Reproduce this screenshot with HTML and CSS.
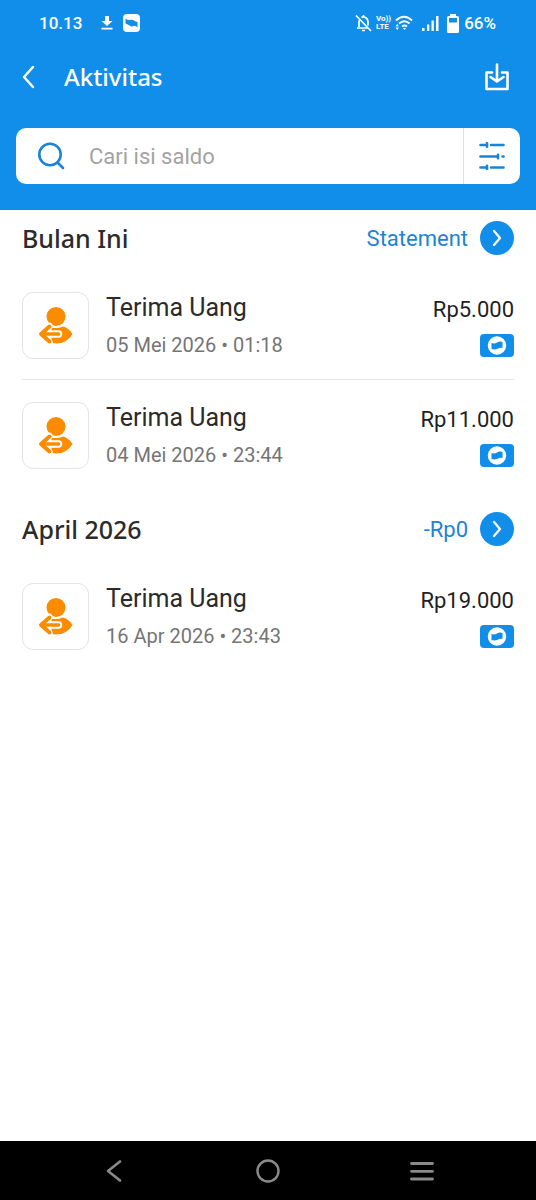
FILE: index.html
```html
<!DOCTYPE html>
<html lang="id">
<head>
<meta charset="utf-8">
<meta name="viewport" content="width=device-width, initial-scale=1">
<title>Aktivitas</title>
<link rel="stylesheet" href="styles.css">
</head>
<body>
<svg class="defs" aria-hidden="true">
  <symbol id="receive" viewBox="0 0 36 38">
    <circle cx="18" cy="9.500" r="9.500" fill="#fb8c00"/>
    <path d="M13 20.500Q19 22 25 19.500Q31 21 34.500 27Q29 36.500 18 36.500L13.500 36V20Z" fill="#fb8c00"/>
    <path d="M11.500 19L3 27L11.500 35" fill="none" stroke="#fff" stroke-width="6.500" stroke-linecap="round" stroke-linejoin="round"/>
    <path d="M8 27H20.500" fill="none" stroke="#fff" stroke-width="7.500" stroke-linecap="round"/>
    <path d="M11.500 19.500L3 27L11.500 34.500" fill="none" stroke="#fb8c00" stroke-width="4" stroke-linecap="round" stroke-linejoin="round"/>
    <path d="M4 27H20.500" fill="none" stroke="#fb8c00" stroke-width="3.600" stroke-linecap="round"/>
  </symbol>
  <symbol id="wallet" viewBox="0 0 34 23">
    <rect width="34" height="23" rx="4" fill="#118eea"/>
    <circle cx="17" cy="11.500" r="9.200" fill="#fff"/>
    <path d="M11.500 9Q14.500 10 17 8.500T22.500 8V14Q20 13.500 17.500 14.700T11.500 15Z" fill="#118eea"/>
  </symbol>
  <symbol id="go" viewBox="0 0 34 34">
    <circle cx="17" cy="17" r="17" fill="#118eea"/>
    <path d="M14 10L20 17L14 24" fill="none" stroke="#fff" stroke-width="2.200" stroke-linecap="round" stroke-linejoin="round"/>
  </symbol>
</svg>
<div class="app">
  <header class="header">
    <div class="status">
      <span class="clock">10.13</span>
      <svg class="status-download" width="12" height="14" viewBox="0 0 12 14"><path d="M4 0H8V5H11.500L6 10L.5 5H4ZM.5 11.800H11.500V13.500H.5Z" fill="#fff"/></svg>
      <svg class="status-app" width="17" height="18" viewBox="0 0 17 18"><rect width="17" height="18" rx="4" fill="#fff"/><path d="M2.500 4.500Q4.500 6.500 7 6T11 6.500Q12.500 7.800 14.500 8V13.500Q12.500 11 10.500 12T6.500 11.500Q4 10 2.500 9.500Z" fill="#118eea"/></svg>
      <div class="status-right">
        <svg width="17" height="18" viewBox="0 0 17 18" fill="none" stroke="#fff" stroke-width="1.700"><path d="M1 1.500L16 17M2 14H13M4 13V8Q4 6.500 5 5M6.500 3.500Q8 2.500 10 3.200Q13 4.500 13 8V11.500M8.500 1V3M7 16.500H10"/></svg>
        <span class="volte"><span>Vo))</span><span>LTE</span></span>
        <svg class="wifi" width="18" height="16" viewBox="0 0 18 16"><path d="M1 5.500Q9 -2 17 5.500M4 8.500Q9.500 4 14.500 8.500M7 11.500Q9.500 9.500 12 11.500" fill="none" stroke="#fff" stroke-width="1.900"/><path d="M8 13H11L9.500 15ZM.5 11.300L2.200 9L4 11.300ZM.5 12.500H4L2.200 15Z" fill="#fff"/></svg>
        <svg class="signal" width="17" height="15" viewBox="0 0 17 15"><path d="M0 12H2.500V15H0ZM5 8.500H7.300V15H5ZM9.500 4.500H11.800V15H9.500ZM14 0H16.500V15H14Z" fill="#fff"/></svg>
        <svg class="battery" width="12" height="19" viewBox="0 0 12 19"><path fill-rule="evenodd" d="M3 0H9V2H10.500Q12 2 12 3.500V17.500Q12 19 10.500 19H1.500Q0 19 0 17.500V3.500Q0 2 1.500 2H3ZM2 4V8.500H10V4Z" fill="#fff"/></svg>
        <span>66%</span>
      </div>
    </div>
    <div class="titlebar">
      <button class="icon-button" aria-label="Kembali"><svg width="13" height="24" viewBox="0 0 13 24"><path d="M11 2L2 12L11 22" fill="none" stroke="#fff" stroke-width="2.500" stroke-linecap="round" stroke-linejoin="round"/></svg></button>
      <h1 class="title">Aktivitas</h1>
      <button class="icon-button" aria-label="Unduh"><svg width="24" height="28" viewBox="0 0 24 28"><path d="M7 9.500H1.500V26H22.500V9.500H17M12 1.500V18M5.500 14L12 18.500L18.500 14" fill="none" stroke="#fff" stroke-width="2.600" stroke-linecap="round" stroke-linejoin="round"/></svg></button>
    </div>
    <div class="search">
      <label class="search-label" for="query" aria-label="Cari"><svg width="28" height="28" viewBox="0 0 28 28"><path d="M20.500 20.500L26 26" stroke="#1b84d6" stroke-width="2.600" stroke-linecap="round"/><circle cx="13" cy="12.500" r="10.700" fill="none" stroke="#1b84d6" stroke-width="2.600"/></svg></label>
      <input class="search-input" id="query" type="text" placeholder="Cari isi saldo">
      <button class="filter" aria-label="Filter"><svg width="26" height="28" viewBox="0 0 26 28"><path d="M1.500 3H7M12 3H24.500M1.500 14.500H18M23.500 14.500H24.500M1.500 25.500H7M12 25.500H24.500" stroke="#1b84d6" stroke-width="2.600" stroke-linecap="round"/><path d="M8 1.200V4.800M19 12.700V16.300M8 23.700V27" stroke="#1b84d6" stroke-width="2.600" stroke-linecap="round"/></svg></button>
    </div>
  </header>
  <main class="content">
    <section class="month">
      <div class="month-head">
        <h2 class="month-name">Bulan Ini</h2>
        <a class="month-link" href="#statement">Statement<svg width="34" height="34"><use href="#go"/></svg></a>
      </div>
      <ul class="list">
        <li class="item">
          <span class="tile"><svg width="36" height="38"><use href="#receive"/></svg></span>
          <div class="info"><span class="name">Terima Uang</span><span class="date">05 Mei 2026 • 01:18</span></div>
          <div class="value"><span class="amount">Rp5.000</span><svg width="34" height="23"><use href="#wallet"/></svg></div>
        </li>
        <li class="item">
          <span class="tile"><svg width="36" height="38"><use href="#receive"/></svg></span>
          <div class="info"><span class="name">Terima Uang</span><span class="date">04 Mei 2026 • 23:44</span></div>
          <div class="value"><span class="amount">Rp11.000</span><svg width="34" height="23"><use href="#wallet"/></svg></div>
        </li>
      </ul>
    </section>
    <section class="month">
      <div class="month-head">
        <h2 class="month-name">April 2026</h2>
        <a class="month-link" href="#april">-Rp0<svg width="34" height="34"><use href="#go"/></svg></a>
      </div>
      <ul class="list">
        <li class="item">
          <span class="tile"><svg width="36" height="38"><use href="#receive"/></svg></span>
          <div class="info"><span class="name">Terima Uang</span><span class="date">16 Apr 2026 • 23:43</span></div>
          <div class="value"><span class="amount">Rp19.000</span><svg width="34" height="23"><use href="#wallet"/></svg></div>
        </li>
      </ul>
    </section>
  </main>
  <nav class="navbar" aria-label="Navigasi sistem">
    <button class="nav-button" aria-label="Kembali"><svg width="16" height="22" viewBox="0 0 16 22"><path d="M14 1.500L2 11L14 20.500" fill="none" stroke="#8a8a8a" stroke-width="2.600" stroke-linecap="round" stroke-linejoin="round"/></svg></button>
    <button class="nav-button" aria-label="Beranda"><svg width="24" height="24" viewBox="0 0 24 24"><circle cx="12" cy="12" r="10.500" fill="none" stroke="#8a8a8a" stroke-width="2.400"/></svg></button>
    <button class="nav-button" aria-label="Aplikasi terbaru"><svg width="24" height="20" viewBox="0 0 24 20"><path d="M1.500 2.500H22.500M1.500 10.300H22.500M1.500 18H22.500" stroke="#8a8a8a" stroke-width="2.800" stroke-linecap="round"/></svg></button>
  </nav>
</div>
</body>
</html>
```
FILE: styles.css
```css
* {
  box-sizing: border-box;
}

body {
  margin: 0;
  background: #fff;
  color: #2b2b2b;
  font-family: Roboto, sans-serif;
}

svg {
  display: block;
  flex: none;
}

button {
  border: 0;
  padding: 0;
  background: none;
  font: inherit;
  cursor: pointer;
}

.defs {
  position: absolute;
  width: 0;
  height: 0;
}

.app {
  display: flex;
  flex-direction: column;
  min-height: 100vh;
}

.header {
  padding: 0 16px 26px;
  background: #118eea;
  color: #fff;
}

.status {
  display: flex;
  align-items: center;
  height: 46px;
  padding: 0 24px 0 23px;
  font-size: 17px;
  font-weight: 500;
}

.status-download {
  margin-left: 19px;
}

.status-app {
  margin-left: 10px;
}

.status-right {
  display: flex;
  align-items: center;
  margin-left: auto;
}

.volte {
  display: flex;
  flex-direction: column;
  margin: 0 4px;
  font-size: 8px;
  font-weight: 700;
  line-height: 8px;
}

.signal {
  margin: 0 8px 0 9px;
}

.battery {
  margin-right: 5px;
}

.titlebar {
  display: flex;
  align-items: center;
  height: 62px;
  padding: 0 11px 0 6px;
}

.icon-button {
  display: flex;
  align-items: center;
}

.title {
  flex: 1;
  margin: 0;
  padding-left: 29px;
  font: 500 24px/32px "Noto Sans", sans-serif;
}

.search {
  display: flex;
  align-items: center;
  height: 56px;
  margin-top: 20px;
  border-radius: 10px;
  background: #fff;
  overflow: hidden;
}

.search-label {
  padding: 0 24px 0 21px;
}

.search-input {
  flex: 1;
  min-width: 0;
  height: 100%;
  border: 0;
  padding: 0;
  outline: 0;
  background: none;
  color: #2b2b2b;
  font: 400 22px/28px Roboto, sans-serif;
}

.search-input::placeholder {
  color: #a3a3a3;
  opacity: 1;
}

.filter {
  display: flex;
  align-items: center;
  height: 100%;
  padding: 0 15px;
  border-left: 1px solid #cfe3f3;
}

.content {
  flex: 1;
  display: flex;
  flex-direction: column;
  gap: 12px;
  padding: 0 22px;
}

.month-head {
  display: flex;
  align-items: center;
  justify-content: space-between;
  height: 56px;
}

.month-name {
  margin: 0;
  font: 500 25px/34px "Noto Sans", sans-serif;
}

.month-link {
  display: flex;
  align-items: center;
  gap: 12px;
  color: #1b84d6;
  font-size: 22px;
  text-decoration: none;
}

.list {
  margin: 4px 0 0;
  padding: 0;
  list-style: none;
}

.item {
  display: flex;
  gap: 17px;
  padding: 22px 0 20px;
}

.item + .item {
  border-top: 1px solid #e4e4e4;
}

.tile {
  display: flex;
  align-items: center;
  justify-content: center;
  width: 67px;
  height: 67px;
  border: 1px solid #e4e4e4;
  border-radius: 11px;
}

.info {
  flex: 1;
  display: flex;
  flex-direction: column;
  gap: 9px;
  padding-top: 1px;
}

.name {
  font-size: 25px;
  line-height: 30px;
}

.date {
  color: #757575;
  font-size: 20px;
  line-height: 26px;
}

.value {
  display: flex;
  flex-direction: column;
  align-items: flex-end;
  gap: 9px;
  padding-top: 3px;
}

.amount {
  color: #1f1f1f;
  font-size: 22px;
  line-height: 30px;
}

.navbar {
  display: flex;
  align-items: center;
  justify-content: space-between;
  height: 59px;
  padding: 0 102px;
  background: #000;
}

.nav-button {
  display: flex;
  align-items: center;
  justify-content: center;
  width: 24px;
  height: 48px;
}
```
